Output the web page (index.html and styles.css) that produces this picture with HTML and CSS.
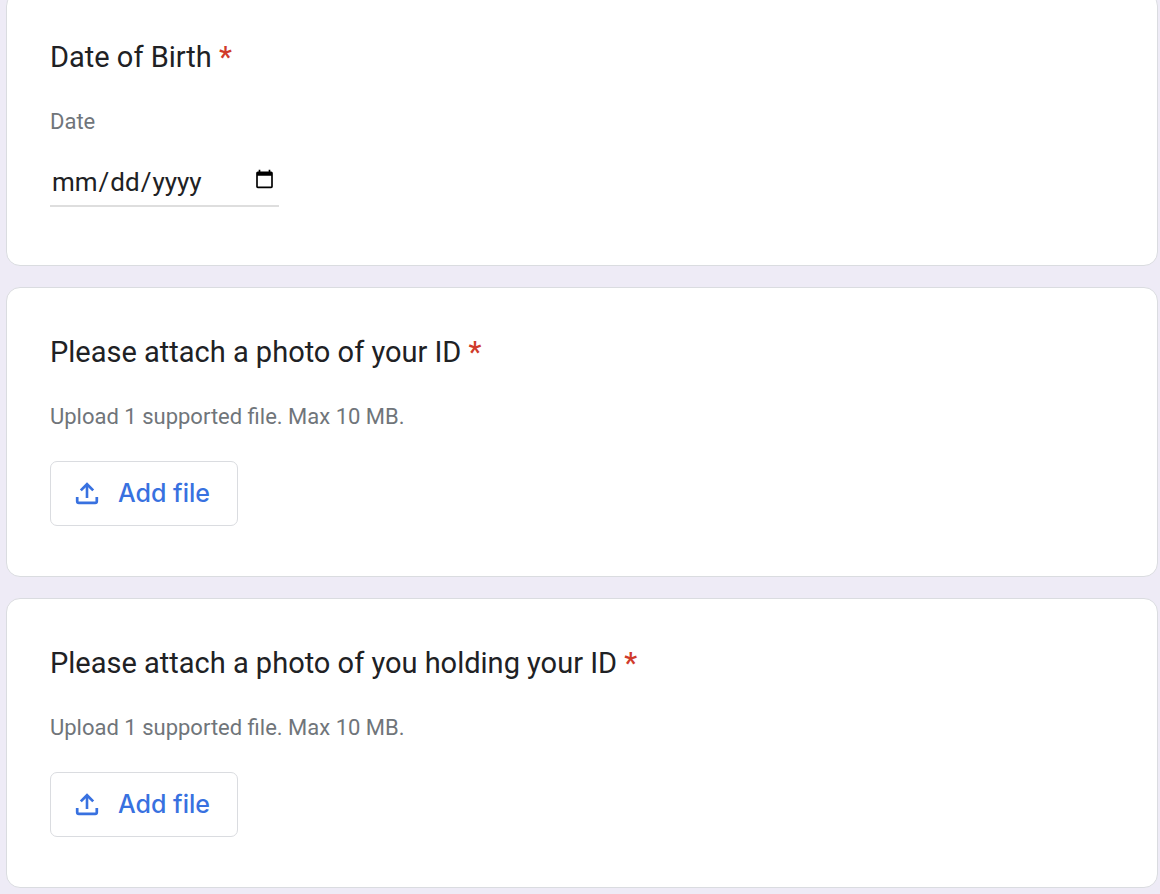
FILE: index.html
```html
<!DOCTYPE html>
<html lang="en">
<head>
  <meta charset="utf-8">
  <title>Identity Form</title>
  <link rel="stylesheet" href="styles.css">
</head>
<body>
  <form class="form">
    <section class="card card-date">
      <h2 class="question">Date of Birth <span class="required">*</span></h2>
      <label class="hint" for="dob">Date</label>
      <input class="date-input" type="date" id="dob" required>
    </section>
    <section class="card">
      <h2 class="question" id="idPhoto">Please attach a photo of your ID <span class="required">*</span></h2>
      <p class="hint">Upload 1 supported file. Max 10 MB.</p>
      <button class="add-file" type="button" aria-describedby="idPhoto">
        <svg class="upload-icon" viewBox="0 0 24 24" fill="none" stroke="currentColor" aria-hidden="true">
          <path d="M12 17V4" stroke-width="2.6"/>
          <path d="M5.8 9.4L12 3.2L18.2 9.4" stroke-width="2.7"/>
          <path d="M2.2 16v4.2q0 1.6 1.6 1.6h16.4q1.6 0 1.6-1.6V16" stroke-width="2.7"/>
        </svg>
        Add file
      </button>
    </section>
    <section class="card">
      <h2 class="question" id="holdingPhoto">Please attach a photo of you holding your ID <span class="required">*</span></h2>
      <p class="hint">Upload 1 supported file. Max 10 MB.</p>
      <button class="add-file" type="button" aria-describedby="holdingPhoto">
        <svg class="upload-icon" viewBox="0 0 24 24" fill="none" stroke="currentColor" aria-hidden="true">
          <path d="M12 17V4" stroke-width="2.6"/>
          <path d="M5.8 9.4L12 3.2L18.2 9.4" stroke-width="2.7"/>
          <path d="M2.2 16v4.2q0 1.6 1.6 1.6h16.4q1.6 0 1.6-1.6V16" stroke-width="2.7"/>
        </svg>
        Add file
      </button>
    </section>
  </form>
</body>
</html>
```
FILE: styles.css
```css
body {
  font-family: Roboto, Arial, sans-serif;
  margin: 0;
  background-color: #eeebf6;
  color: #202124;
}
.form {
  display: flex;
  flex-direction: column;
  gap: 21px;
  margin: -8px 2px 6px 6px;
}
.card {
  display: flex;
  flex-direction: column;
  align-items: flex-start;
  padding: 43px 43px 50px;
  background-color: #fff;
  border: 1px solid #dadce0;
  border-radius: 14px;
}
.card-date {
  padding-bottom: 58px;
}
.question {
  margin: 0 0 29px;
  font-size: 29px;
  line-height: 43px;
  font-weight: 400;
}
.required {
  color: #d03b2b;
  font-weight: 500;
}
.hint {
  margin: 0 0 30px;
  font-size: 22px;
  line-height: 28px;
  color: #70757a;
}
.date-input {
  box-sizing: border-box;
  width: 229px;
  height: 41px;
  padding: 0 4px 8px 1px;
  border: none;
  border-bottom: 2px solid #dedede;
  background: none;
  color: #202124;
  font-family: Roboto, Arial, sans-serif;
  font-size: 26px;
}
.date-input::-webkit-calendar-picker-indicator {
  width: 21px;
  height: 21px;
  padding: 0;
  margin-bottom: 4px;
}
.add-file {
  display: flex;
  align-items: center;
  gap: 19px;
  height: 65px;
  padding: 0 27px 2px 24px;
  border: 1px solid #dadce0;
  border-radius: 7px;
  background-color: #fff;
  color: #3871e0;
  font-family: Inter, Roboto, sans-serif;
  font-size: 25px;
  font-weight: 500;
  cursor: pointer;
}
.add-file:hover {
  background-color: #f6f9fe;
}
.upload-icon {
  width: 24px;
  height: 24px;
}
```
